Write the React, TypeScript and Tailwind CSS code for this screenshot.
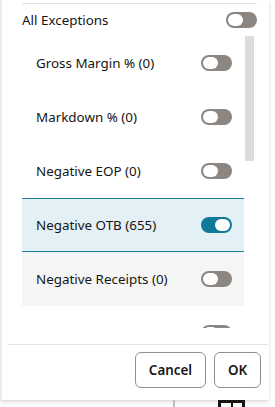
import React from 'react';

const font = { fontFamily: '"Noto Sans", "Liberation Sans", sans-serif' };

const Toggle = ({ on }: { on?: boolean }) => (
  <div
    className={`w-[31px] h-[16px] rounded-full p-[2px] flex items-center ${
      on ? 'bg-[#0f7a98] justify-end' : 'bg-[#8b8681] justify-start'
    }`}
  >
    <div className="w-[15px] h-[12px] rounded-[6px] bg-white" />
  </div>
);

const rows = [
  { label: 'Gross Margin % (0)' },
  { label: 'Markdown % (0)' },
  { label: 'Negative EOP (0)' },
  { label: 'Negative OTB (655)', on: true },
  { label: 'Negative Receipts (0)', hover: true },
  { label: '' },
];

export default function App() {
  return (
    <div className="w-[275px] h-[407px] bg-white overflow-hidden text-[#161513]" style={font}>
      <div className="w-[269px] h-[400px] bg-white border-l-2 border-[#ececec] shadow-[0_2px_4px_rgba(0,0,0,0.15)] flex flex-col">
        <div className="pt-[3px] pl-[20px] pr-[12px]">
          <div className="h-px bg-[#e4e4e4]" />
          <div className="h-[32px] flex items-center justify-between">
            <span className="text-[13.4px]">All Exceptions</span>
            <Toggle />
          </div>
        </div>

        <div className="flex pl-[20px] pr-[15px] h-[292px] overflow-hidden">
          <div className="flex-1 flex flex-col">
            {rows.map((r, i) => (
              <div
                key={i}
                className={`shrink-0 h-[54px] flex items-center justify-between pl-[14px] pr-[12px] ${
                  r.on
                    ? 'bg-[#e3f0f6] border-y border-[#1f7f9c]'
                    : r.hover
                    ? 'bg-[#f5f5f5]'
                    : ''
                }`}
              >
                <span className="text-[13.4px]">{r.label}</span>
                <Toggle on={r.on} />
              </div>
            ))}
          </div>
          <div className="w-[9px] ml-px">
            <div className="h-[125px] bg-[#dcdcdc]" />
          </div>
        </div>

        <div className="mt-[16px] ml-[6px] mr-[1px] h-px bg-[#e2e2e2]" />
        <div className="flex justify-end gap-[8px] pt-[7px] pr-[8px]">
          <button className="h-[36px] w-[71px] rounded-[6px] border border-[#8f8f8f] text-[13.4px] font-semibold bg-white">
            Cancel
          </button>
          <button className="h-[36px] w-[47px] rounded-[6px] border border-[#8f8f8f] text-[13.4px] font-semibold bg-white">
            OK
          </button>
        </div>
      </div>
      <div className="flex h-[7px]">
        <div className="ml-[173px] w-[2px] h-[7px] bg-[#bbbbbb]" />
        <div className="ml-[43px] w-[27px] h-[7px] border-x-[3px] border-t-[3px] border-[#161513] flex">
          <div className="mx-auto w-[2px] bg-[#161513]" />
        </div>
      </div>
    </div>
  );
}
